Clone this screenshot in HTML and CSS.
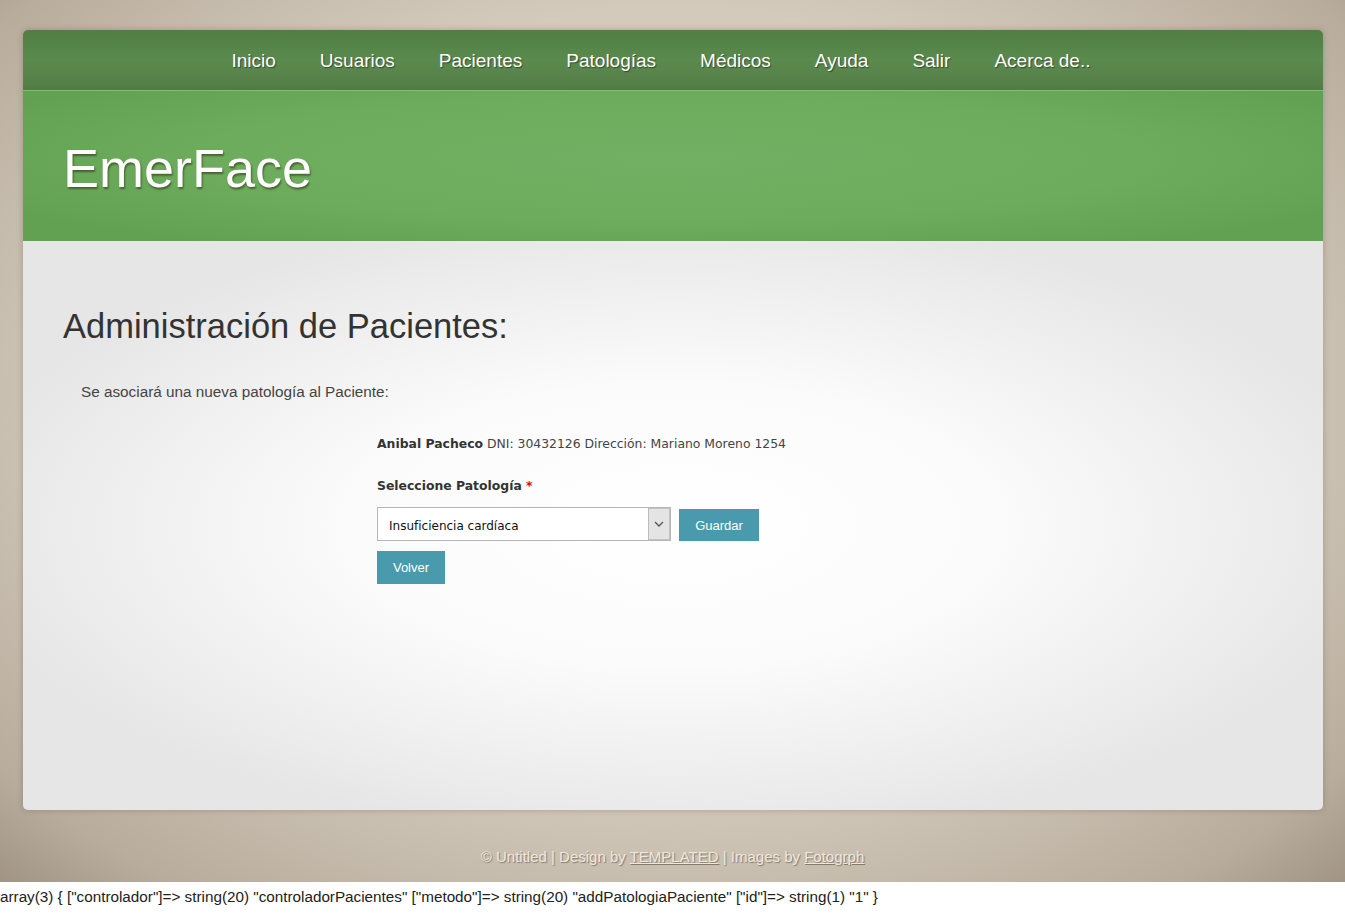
FILE: index.html
```html
<!DOCTYPE html>
<html lang="es">
<head>
<meta charset="utf-8">
<title>EmerFace</title>
<link rel="stylesheet" href="styles.css">
</head>
<body>
<div class="page">
  <div class="container">
    <nav class="nav">
      <a href="#">Inicio</a>
      <a href="#">Usuarios</a>
      <a href="#">Pacientes</a>
      <a href="#">Patologías</a>
      <a href="#">Médicos</a>
      <a href="#">Ayuda</a>
      <a href="#">Salir</a>
      <a href="#">Acerca de..</a>
    </nav>
    <header class="header">
      <h1 class="logo">EmerFace</h1>
    </header>
    <main class="main">
      <h2 class="title">Administración de Pacientes:</h2>
      <p class="intro">Se asociará una nueva patología al Paciente:</p>
      <form class="form">
        <p class="patient"><strong>Anibal Pacheco</strong> DNI: 30432126 Dirección: Mariano Moreno 1254</p>
        <label class="label">Seleccione Patología <span class="req">*</span></label>
        <div class="row">
          <div class="select">
            <span class="select-value">Insuficiencia cardíaca</span>
            <span class="select-arrow"><svg width="10" height="6" viewBox="0 0 10 6"><path d="M1 1l4 4 4-4" fill="none" stroke="#555" stroke-width="1.3"/></svg></span>
          </div>
          <button type="button" class="btn btn-save">Guardar</button>
        </div>
        <button type="button" class="btn btn-back">Volver</button>
      </form>
    </main>
  </div>
  <footer class="footer">© Untitled | Design by <a href="#">TEMPLATED</a> | Images by <a href="#">Fotogrph</a></footer>
</div>
<div class="dump">array(3) { ["controlador"]=&gt; string(20) "controladorPacientes" ["metodo"]=&gt; string(20) "addPatologiaPaciente" ["id"]=&gt; string(1) "1" }</div>
</body>
</html>
```
FILE: styles.css
```css
html, body {
  margin: 0;
  padding: 0;
  background: #fff;
  font-family: "Liberation Sans", Arial, sans-serif;
}
.page {
  height: 882px;
  box-sizing: border-box;
  padding-top: 30px;
  background: radial-gradient(ellipse 75% 80% at 50% 45%, #d9d0c1 0%, #d4cabb 55%, #b8ad9d 85%, #978a7a 100%);
}
.container {
  width: 1300px;
  margin-left: 23px;
  border-radius: 5px;
  box-shadow: 0 0 6px rgba(60, 45, 30, 0.25);
}
.nav {
  height: 61px;
  box-sizing: border-box;
  padding: 2px 24px 0 0;
  display: flex;
  justify-content: center;
  align-items: center;
  border-radius: 5px 5px 0 0;
  background: linear-gradient(to bottom, #507e43 0%, #5a8a4e 50%, #557f48 92%, #507a43 100%);
  border-bottom: 1px solid #7fbf6e;
}
.nav a {
  color: #fff;
  text-decoration: none;
  font-size: 19px;
  padding: 0 22px;
  text-shadow: 1px 1px 1px rgba(0, 0, 0, 0.45);
}
.header {
  height: 150px;
  box-sizing: border-box;
  padding: 4px 0 0 40px;
  display: flex;
  align-items: center;
  background: radial-gradient(ellipse 60% 70% at 50% 45%, #72b063 0%, #6dac5d 60%, #62a052 100%);
}
.logo {
  margin: 0;
  font-weight: normal;
  font-size: 54px;
  color: #fff;
  text-shadow: 1px 2px 2px rgba(40, 40, 10, 0.55);
}
.main {
  height: 569px;
  box-sizing: border-box;
  padding: 66px 40px 0;
  border-radius: 0 0 5px 5px;
  background: radial-gradient(ellipse 55% 55% at 50% 50%, #ffffff 0%, #fbfbfb 45%, #ececec 85%, #e6e6e6 100%);
}
.title {
  margin: 0;
  font-weight: normal;
  font-size: 34.5px;
  line-height: 38px;
  color: #333;
}
.intro {
  margin: 38px 0 0 18px;
  font-size: 15.3px;
  line-height: 18px;
  color: #444;
}
.form {
  margin: 35px 0 0 314px;
  font-family: "DejaVu Sans", Verdana, sans-serif;
  color: #444;
}
.patient {
  margin: 0;
  font-size: 12.4px;
  line-height: 16px;
}
.patient strong {
  color: #333;
}
.label {
  display: block;
  margin-top: 26px;
  font-size: 12.4px;
  line-height: 16px;
  font-weight: bold;
  color: #333;
}
.req {
  color: #e00;
}
.row {
  display: flex;
  align-items: flex-end;
  margin-top: 13px;
}
.select {
  width: 294px;
  height: 34px;
  box-sizing: border-box;
  display: flex;
  border: 1px solid #b5b5b5;
  background: #fff;
}
.select-value {
  flex: 1;
  padding: 2px 0 0 11px;
  font-size: 12px;
  line-height: 32px;
  color: #111;
}
.select-arrow {
  width: 20px;
  display: flex;
  align-items: center;
  justify-content: center;
  background: #e4e4e4;
  border: 1px solid #c4c4c4;
  border-left: 1px solid #bbb;
}
.btn {
  border: none;
  background: #4a9aae;
  color: #fff;
  font-family: "Liberation Sans", Arial, sans-serif;
  font-size: 13px;
  padding: 0;
  cursor: pointer;
}
.btn-save {
  width: 80px;
  height: 32px;
  margin-left: 8px;
}
.btn-back {
  display: block;
  width: 68px;
  height: 33px;
  margin-top: 10px;
}
.footer {
  padding-top: 38px;
  text-align: center;
  font-size: 15px;
  line-height: 18px;
  color: #ede9e2;
  text-shadow: 1px 1px 1px rgba(90, 75, 55, 0.6);
}
.footer a {
  color: #ede9e2;
}
.dump {
  padding-top: 6px;
  font-size: 15.25px;
  line-height: 18px;
  color: #222;
}
```
